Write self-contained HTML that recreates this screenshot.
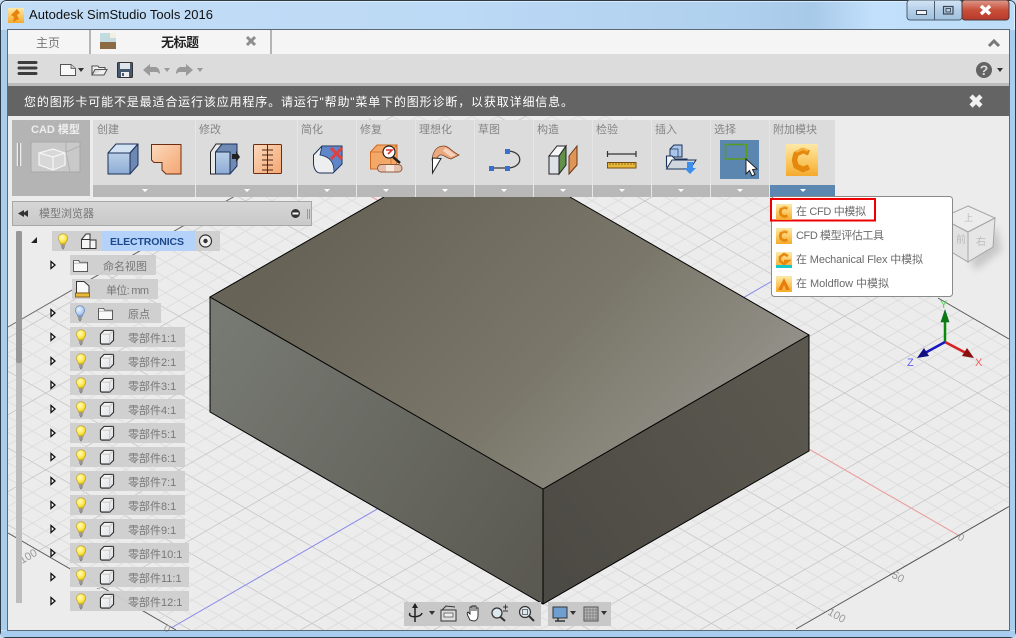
<!DOCTYPE html>
<html><head><meta charset="utf-8"><title>Autodesk SimStudio Tools 2016</title>
<style>
html,body{margin:0;padding:0;width:1016px;height:638px;overflow:hidden;background:#b9d7f3}
svg{display:block}
text{font-family:"Liberation Sans","Noto Sans CJK SC",sans-serif}
.l{font-size:11px;fill:#858585}
.t{font-size:11px;fill:#777}
.m{font-size:11px;fill:#6a6a6a}
</style></head><body>
<svg xmlns="http://www.w3.org/2000/svg" width="1016" height="638" viewBox="0 0 1016 638">
<defs>
<linearGradient id="aero" x1="0" x2="1" y1="0" y2="0"><stop offset="0" stop-color="#c3ddf6"/><stop offset=".45" stop-color="#bcd9f5"/><stop offset=".72" stop-color="#afd0ee"/><stop offset=".8" stop-color="#a8cae9"/><stop offset=".86" stop-color="#c2e0fb"/><stop offset="1" stop-color="#bcdcf8"/></linearGradient>
<linearGradient id="red" x1="0" x2="0" y1="0" y2="1"><stop offset="0" stop-color="#dd9a8c"/><stop offset=".5" stop-color="#c8503a"/><stop offset="1" stop-color="#b8382a"/></linearGradient>
<linearGradient id="btn" x1="0" x2="0" y1="0" y2="1"><stop offset="0" stop-color="#d5e6f6"/><stop offset=".5" stop-color="#b5cfe8"/><stop offset="1" stop-color="#9fc0de"/></linearGradient>
<linearGradient id="blu" x1="0" x2="0" y1="0" y2="1"><stop offset="0" stop-color="#b9cfe8"/><stop offset="1" stop-color="#8dabd4"/></linearGradient>
<linearGradient id="org" x1="0" x2="1" y1="0" y2="1"><stop offset="0" stop-color="#fbd9bd"/><stop offset="1" stop-color="#f4a671"/></linearGradient>
<linearGradient id="gold" x1="0" x2="0" y1="0" y2="1"><stop offset="0" stop-color="#fde9a8"/><stop offset=".6" stop-color="#fac55a"/><stop offset="1" stop-color="#f5a92e"/></linearGradient>
<linearGradient id="fa" gradientUnits="userSpaceOnUse" x1="340" y1="210" x2="640" y2="500"><stop offset="0" stop-color="#676457"/><stop offset=".6" stop-color="#7a776a"/><stop offset="1" stop-color="#918f86"/></linearGradient>
<linearGradient id="fb" gradientUnits="userSpaceOnUse" x1="210" y1="330" x2="540" y2="560"><stop offset="0" stop-color="#777a73"/><stop offset="1" stop-color="#5b5a52"/></linearGradient>
<linearGradient id="fc" gradientUnits="userSpaceOnUse" x1="543" y1="560" x2="809" y2="370"><stop offset="0" stop-color="#4c4a44"/><stop offset="1" stop-color="#5b594f"/></linearGradient>
<linearGradient id="hdr" x1="0" x2="0" y1="0" y2="1"><stop offset="0" stop-color="#d6d6d6"/><stop offset="1" stop-color="#c9c9c9"/></linearGradient>
<linearGradient id="cube" x1="0" x2="1" y1="0" y2="1"><stop offset="0" stop-color="#fafafa"/><stop offset="1" stop-color="#dcdfe4"/></linearGradient>
<radialGradient id="bulbY" cx=".4" cy=".35" r=".7"><stop offset="0" stop-color="#fffbc8"/><stop offset=".6" stop-color="#ffe94a"/><stop offset="1" stop-color="#e0b018"/></radialGradient>
<radialGradient id="bulbB" cx=".4" cy=".35" r=".7"><stop offset="0" stop-color="#eef4ff"/><stop offset=".6" stop-color="#b6cff2"/><stop offset="1" stop-color="#7f9fd0"/></radialGradient>
<filter id="soft" x="-30%" y="-30%" width="160%" height="160%"><feGaussianBlur stdDeviation="4"/></filter>

<pattern id="gA" patternUnits="userSpaceOnUse" width="100" height="76.8" patternTransform="translate(0,-17.8) skewY(29.98)">
<path d="M0 15.36H100M0 30.72H100M0 46.08H100M0 61.44H100" stroke="#dcdcdc" stroke-width="1" fill="none"/><path d="M0 0H100" stroke="#bdbdbd" stroke-width="1.4" fill="none"/></pattern>
<pattern id="gB" patternUnits="userSpaceOnUse" width="100" height="76.8" patternTransform="translate(0,726.2) skewY(-29.98)">
<path d="M0 15.36H100M0 30.72H100M0 46.08H100M0 61.44H100" stroke="#dcdcdc" stroke-width="1" fill="none"/><path d="M0 0H100" stroke="#bdbdbd" stroke-width="1.4" fill="none"/></pattern>
<clipPath id="gc"><polygon points="0,331.6 498,44 1016,343 1016,502 485,808 0,528"/></clipPath>

<symbol id="by" viewBox="0 0 14 20" overflow="visible"><path d="M7 1C3.500 1 1.500 3.500 1.500 6.300c0 2.600 2.200 3.800 2.700 6.700h5.600c.5-2.900 2.700-4.100 2.700-6.700C12.500 3.500 10.500 1 7 1z" fill="url(#bulbY)" stroke="#b89a20" stroke-width=".7"/><path d="M4.500 13.500h5v1.500h-5zM5 15.500h4v2h-4z" fill="#8a8a8a"/><path d="M6 18h2v1H6z" fill="#555"/></symbol>
<symbol id="bb" viewBox="0 0 14 20" overflow="visible"><path d="M7 1C3.500 1 1.500 3.500 1.500 6.300c0 2.600 2.200 3.800 2.700 6.700h5.600c.5-2.900 2.700-4.100 2.700-6.700C12.500 3.500 10.500 1 7 1z" fill="url(#bulbB)" stroke="#5d7fb8" stroke-width=".7"/><path d="M4.500 13.500h5v1.500h-5zM5 15.500h4v2h-4z" fill="#8a8a8a"/><path d="M6 18h2v1H6z" fill="#555"/></symbol>
<symbol id="pt" viewBox="0 0 16 17" overflow="visible"><path d="M1 5.500 5 1.500H15V12L11 16H2L1 15z" fill="url(#cube)" stroke="#222" stroke-width="1.100" stroke-linejoin="round"/><path d="M1.500 5.500H11V15.500M11 5.500 15 1.500" fill="none" stroke="#bbb" stroke-width=".8"/></symbol>
<symbol id="fd" viewBox="0 0 16 14" overflow="visible"><path d="M.5 2V13.500H15.500V3.500H7L6 1.500H1z" fill="#f8f8f8" stroke="#444" stroke-width=".9"/><path d="M1 4.500H15" stroke="#aaa" stroke-width=".8"/></symbol>
<symbol id="tw" viewBox="0 0 6 10" overflow="visible"><path d="M1 1.500 5 5 1 8.500z" fill="#fff" stroke="#111" stroke-width="1.300"/></symbol>
<symbol id="cl" viewBox="0 0 32 32" overflow="visible"><rect width="32" height="32" fill="url(#gold)"/><path d="M23 9 17 6.500 10 10 8.500 16 10 22 17 25.500 23 23" fill="none" stroke="#e5890e" stroke-width="5.500" stroke-linejoin="round"/><path d="M22 6.500 17 5 10 8" fill="none" stroke="#f6b540" stroke-width="2"/></symbol>
</defs>

<!-- window frame -->
<rect width="1016" height="638" fill="url(#aero)"/>
<rect x=".5" y=".5" width="1015" height="637" rx="6" fill="none" stroke="#2e3a46" stroke-width="1"/>
<rect x="1.500" y="1.500" width="1013" height="635" rx="5" fill="none" stroke="#e4f1fb" stroke-width="1" opacity=".8"/>
<rect x="1" y="30" width="6" height="600" fill="#a9cdec"/>
<rect x="1010" y="30" width="5" height="600" fill="#a9cdec"/>
<rect x="1" y="631" width="1014" height="6" fill="#a8cdee"/>

<!-- client -->
<rect x="8" y="30" width="1001" height="600" fill="#ececec"/>

<!-- grid -->
<g clip-path="url(#gc)"><rect x="8" y="30" width="1001" height="600" fill="url(#gA)"/><rect x="8" y="30" width="1001" height="600" fill="url(#gB)"/></g>
<path d="M172 627.500 800 265" stroke="#8a8af0" stroke-width="1" fill="none"/>
<path d="M360 190 958 535" stroke="#f09a9a" stroke-width="1" fill="none"/>
<path d="M8 533 176 630" stroke="#555" stroke-width="1" fill="none"/>
<path d="M796 629 1009 506.500" stroke="#555" stroke-width="1" fill="none"/>
<path d="M8 327 300 158.500" stroke="#666" stroke-width="1" fill="none"/>
<path d="M938 298 1009 339" stroke="#555" stroke-width="1" fill="none"/>
<g font-size="11" fill="#999"><text transform="translate(22,564) rotate(-30)">100</text><text transform="translate(97,590) rotate(-30)" font-size="10">50</text><text transform="translate(163,630) rotate(30)" font-size="10">0</text><text transform="translate(957,539) rotate(30)" font-size="10">0</text><text transform="translate(891,577) rotate(30)">50</text><text transform="translate(827,614) rotate(30)">100</text></g>

<!-- 3D box -->
<polygon points="210,297 384,197 570,197 809,335 543,489" fill="url(#fa)"/>
<polygon points="210,297 543,489 543,604 210,412" fill="url(#fb)"/>
<polygon points="543,489 809,335 809,451 543,604" fill="url(#fc)"/>
<path d="M384 197 210 297 543 489 809 335 570 197M210 297V412L543 604 809 451V335M543 489V604" fill="none" stroke="#000" stroke-width="1"/>

<!-- titlebar -->
<rect x="8" y="8" width="16" height="15" fill="url(#gold)"/>
<path d="M17 9 20 13 17 15 19 19 13 22 14 17 11 15z" fill="#e8820c"/>
<text x="29" y="19" font-size="13" fill="#101010" textLength="184">Autodesk SimStudio Tools 2016</text>
<rect x="907" y="0" width="55" height="20" rx="3" fill="url(#btn)" stroke="#4d5e70" stroke-width="1"/>
<rect x="962" y="0" width="47" height="20" rx="3" fill="url(#red)" stroke="#4d3a3a" stroke-width="1"/>
<path d="M934.500 1V20" stroke="#4d5e70" stroke-width="1"/>
<rect x="916.500" y="10.500" width="10" height="4" fill="#f2f6fa" stroke="#3c4650" stroke-width="1"/>
<rect x="943.500" y="6.500" width="9.500" height="7.500" fill="none" stroke="#3c4650" stroke-width="1.200"/><rect x="946" y="8.500" width="4.500" height="3.500" fill="none" stroke="#3c4650" stroke-width=".9"/>
<path d="M981 6 990 14M990 6 981 14" stroke="#fff" stroke-width="3.500"/>
<rect x="7.500" y="29.500" width="1002" height="601" fill="none" stroke="#5c6a78" stroke-width="1"/>

<!-- tabs -->
<rect x="8" y="30" width="1001" height="24" fill="#f5f5f5"/>
<rect x="89" y="30" width="2" height="24" fill="#b5b5b5"/>
<rect x="270" y="30" width="2" height="24" fill="#b5b5b5"/>
<text x="36" y="47" font-size="12" fill="#777">主页</text>
<rect x="100" y="33" width="16" height="16" fill="#c2dbe0"/><rect x="100" y="42" width="16" height="7" fill="#8b6a44"/><path d="M110 33h6v5h-6z" fill="#f4f0e0"/>
<text x="161" y="47" font-size="13" font-weight="700" fill="#222" textLength="38">无标题</text>
<path d="M247 37 255 45M255 37 247 45" stroke="#8e8e8e" stroke-width="3"/>
<path d="M989 46 994 41 999 46" fill="none" stroke="#777" stroke-width="3"/>

<!-- toolbar -->
<rect x="8" y="54" width="1001" height="29" fill="#dcdcdc"/>
<rect x="8" y="83" width="1001" height="3" fill="#bcbcbc"/>
<path d="M19 62.500H36M19 68H36M19 73.500H36" stroke="#3c3c3c" stroke-width="3" stroke-linecap="round"/>
<path d="M60.500 64.500H71L75.500 68.500V75.500H60.500z" fill="#f8f8f8" stroke="#555" stroke-width="1"/><path d="M71 64.500V68.500H75.500" fill="#ccc" stroke="#555" stroke-width=".8"/>
<path d="M78 68H84L81 72z" fill="#333"/>
<path d="M92 75V66H98L99 67.500H105V69M92 75H104L107 69.500H95z" fill="#eef0f2" stroke="#555" stroke-width="1.100"/>
<rect x="117.500" y="62.500" width="15" height="15" rx="1" fill="#46586e" stroke="#333" stroke-width="1"/><rect x="120" y="63" width="10" height="6" fill="#dfe5ea"/><rect x="121" y="72" width="8" height="5" fill="#eee"/><rect x="122" y="73" width="2" height="3" fill="#46586e"/>
<path d="M143 70 150 64V67H155C158 67 160 70 160 74L157 72H150V76z" fill="#9a9a9a"/><path d="M164 68H170L167 72z" fill="#9a9a9a"/>
<path d="M193 70 186 64V67H181C178 67 176 70 176 74L179 72H186V76z" fill="#9a9a9a"/><path d="M197 68H203L200 72z" fill="#9a9a9a"/>
<circle cx="984" cy="70" r="8" fill="#636363"/><text x="984" y="75" font-size="14" font-weight="700" fill="#dcdcdc" text-anchor="middle">?</text><path d="M997 68H1003L1000 72z" fill="#333"/>

<!-- notice -->
<rect x="8" y="86" width="1001" height="30" fill="#646464"/>
<text x="24" y="106" font-size="12" fill="#fff" textLength="549">您的图形卡可能不是最适合运行该应用程序。请运行"帮助"菜单下的图形诊断，以获取详细信息。</text>
<path d="M971 96 981 106M981 96 971 106" stroke="#f0f0f0" stroke-width="4.500"/>

<!-- ribbon -->
<rect x="93" y="120" width="742" height="77" fill="#e6e6e6"/>
<rect x="12" y="120" width="78" height="76" fill="#b4b4b4"/>
<text x="31" y="133" font-size="11" font-weight="700" fill="#eee">CAD 模型</text>
<path d="M17.500 143V166M20.500 143V166" stroke="#eee" stroke-width="1.500"/><path d="M19 143V166" stroke="#777" stroke-width="1"/>
<rect x="31" y="142" width="49" height="30" fill="#c9c9c9" stroke="#a8a8a8"/>
<path d="M66 142V152L80 146M66 152 70 172" fill="none" stroke="#b0b0b0"/>
<path d="M39 153 53 149 65 153V165L53 170 39 165z" fill="#d8d8d8" stroke="#f5f5f5" stroke-width="1.200"/><path d="M39 153 53 157 65 153M53 157V170" fill="none" stroke="#f5f5f5" stroke-width="1.200"/>

<g fill="#dcdcdc">
<rect x="93" y="120" width="102" height="65"/><rect x="196" y="120" width="101" height="65"/><rect x="298" y="120" width="58" height="65"/><rect x="357" y="120" width="58" height="65"/><rect x="416" y="120" width="58" height="65"/><rect x="475" y="120" width="58" height="65"/><rect x="534" y="120" width="58" height="65"/><rect x="593" y="120" width="58" height="65"/><rect x="652" y="120" width="58" height="65"/><rect x="711" y="120" width="58" height="65"/><rect x="770" y="120" width="65" height="65"/>
</g>
<g fill="#b8b8b8">
<rect x="93" y="185" width="102" height="12"/><rect x="196" y="185" width="101" height="12"/><rect x="298" y="185" width="58" height="12"/><rect x="357" y="185" width="58" height="12"/><rect x="416" y="185" width="58" height="12"/><rect x="475" y="185" width="58" height="12"/><rect x="534" y="185" width="58" height="12"/><rect x="593" y="185" width="58" height="12"/><rect x="652" y="185" width="58" height="12"/><rect x="711" y="185" width="58" height="12"/>
</g>
<rect x="770" y="185" width="65" height="12" fill="#5b87b0"/>
<g fill="#fff"><path d="M142 189h6l-3 3zM244 189h6l-3 3zM324 189h6l-3 3zM383 189h6l-3 3zM442 189h6l-3 3zM501 189h6l-3 3zM560 189h6l-3 3zM619 189h6l-3 3zM678 189h6l-3 3zM737 189h6l-3 3zM800 189h6l-3 3z"/></g>
<g class="l"><text class="l" x="97" y="133">创建</text><text class="l" x="199" y="133">修改</text><text class="l" x="301" y="133">简化</text><text class="l" x="360" y="133">修复</text><text class="l" x="419" y="133">理想化</text><text class="l" x="478" y="133">草图</text><text class="l" x="537" y="133">构造</text><text class="l" x="596" y="133">检验</text><text class="l" x="655" y="133">插入</text><text class="l" x="714" y="133">选择</text><text class="l" x="773" y="133">附加模块</text></g>

<!-- create box -->
<g stroke="#1c3158" stroke-width="1" stroke-linejoin="round"><path d="M108 153 116 144H138L130 153z" fill="#d2e2f3"/><path d="M130 153 138 144V165L130 174z" fill="#6d88b2"/><rect x="108" y="153" width="22" height="21" fill="url(#blu)"/></g>
<path d="M151.500 144.500H181V174H166L162 170V162.500H154L151.500 160z" fill="url(#org)" stroke="#6f2c10" stroke-width="1"/>
<!-- press pull -->
<path d="M210.500 174V152L216 144H222V174z" fill="#e8e8e8" stroke="#222"/><path d="M215.500 174V152L222 144H237V166L230 174z" fill="#6f8bb4" stroke="#1c3158"/><rect x="215.500" y="152" width="14.500" height="22" fill="url(#blu)" stroke="#1c3158"/>
<path d="M232 154H236V151L240 157 236 162V159H232z" fill="#222"/>
<!-- split -->
<rect x="253.500" y="144.500" width="28" height="29" rx="1" fill="url(#org)" stroke="#6f2c10"/><path d="M267.500 144.500V174M262 150H273M262 155H273M262 160H273M262 165H273M262 170H273" stroke="#4a2a1a" stroke-width="1"/>
<!-- simplify -->
<path d="M313.500 155 322 146H342V164L333 173H320C316 173 313.500 168 313.500 163z" fill="#eceef0" stroke="#1c3158"/>
<path d="M322 146H342V164L334 172C334 162 330 157 320 155z" fill="#5f86c8" stroke="#1c3158" stroke-width=".8"/>
<path d="M331 148 342 159M342 148 331 159" stroke="#e04040" stroke-width="3"/>
<!-- repair -->
<path d="M370.500 152 377 145H397V163L392 169H370.500z" fill="#f4a868" stroke="#d06a20"/><path d="M370.500 152H391V169M391 152 397 145" fill="none" stroke="#d06a20" stroke-width=".8"/>
<circle cx="389" cy="152" r="6" fill="#fff" stroke="#222" stroke-width="1.200"/><path d="M386 150H392L388 154" stroke="#d33" stroke-width="1.600" fill="none"/><path d="M393 157 400 163" stroke="#222" stroke-width="2.500"/>
<rect x="377.500" y="164.500" width="24.500" height="7.500" rx="3.700" fill="#e6c0ac" stroke="#8c5a40"/><rect x="386" y="165" width="8" height="6.500" fill="#f6e6dc"/>
<!-- idealize -->
<path d="M432 160C433 150 437 146 444 146 449 146 452 152 459 155L451 159C446 158 443 154 440 155 437 156 436 160 434 163z" fill="#eba97f" stroke="#7a4020" stroke-width=".8"/>
<path d="M445 148C449 149 452 153 456 155L451 157C448 155 445 152 443 151z" fill="#f7d2ba"/>
<path d="M432.500 173V158L441 158.500z" fill="#fff" stroke="#222"/>
<!-- sketch -->
<path d="M491 168H507C524 168 524 151 507 151" fill="none" stroke="#3a3a3a" stroke-width="1.300"/><g fill="#3a6fd0"><rect x="489" y="166" width="5" height="5"/><rect x="505" y="166" width="5" height="5"/><rect x="505" y="149" width="5" height="5"/></g>
<!-- construct -->
<rect x="549" y="156" width="10" height="18" fill="#dde2e8" stroke="#222"/><path d="M549 156 557 146H566L559 156z" fill="#f4f6f8" stroke="#222"/><path d="M559 156 566 146V165L559 174z" fill="#629049" stroke="#222"/>
<path d="M569 156 577 146V165L569 174z" fill="#dd9558" stroke="#6b3518"/>
<!-- inspect -->
<path d="M607.500 151V157M636 151V157M607.500 154H636" stroke="#333" stroke-width="1.200" fill="none"/><rect x="607.500" y="162.500" width="28.500" height="5.500" fill="#e7b93a" stroke="#7a4d10"/><path d="M610 163V165M613 163V165M616 163V165M619 163V165M622 163V165M625 163V165M628 163V165M631 163V165M634 163V165" stroke="#7a4d10" stroke-width=".7"/>
<!-- insert -->
<path d="M670 149 674 145H682V157H670z" fill="#a9c6ea" stroke="#1c3158"/><path d="M670 149H678V157" fill="none" stroke="#1c3158" stroke-width=".7"/>
<path d="M666.500 167V156H672L675 159H687V167z" fill="#f2f4f6" stroke="#1c3158" stroke-width="1.100"/><path d="M666.500 169 672 160H696L690 169z" fill="#cfd6de" stroke="#1c3158"/>
<path d="M687 162H693V168H696L690 174 684 168H687z" fill="#3c8ee8"/>
<!-- select -->
<rect x="720" y="140" width="39" height="39" fill="#5a86b0"/><rect x="725.500" y="144.500" width="21" height="14.500" fill="none" stroke="#5a9a20" stroke-width="1.500"/>
<path d="M746 159V174L749.500 170.500 752 176 755 174.500 752.500 169.500 757 169z" fill="#fff" stroke="#222" stroke-width="1"/>
<!-- addins -->
<use href="#cl" x="786" y="144" width="32" height="32"/>

<!-- browser panel -->
<rect x="12.500" y="201.500" width="299" height="24" fill="url(#hdr)" stroke="#a8a8a8"/>
<path d="M24 210V217L18 213.500zM28 210V217L22.500 213.500z" fill="#333"/>
<text x="39" y="217" font-size="11" fill="#777">模型浏览器</text>
<circle cx="295.500" cy="213.500" r="4.500" fill="#333"/><rect x="292.500" y="212.500" width="6" height="2" fill="#fff"/>
<path d="M307.500 209V219M309.500 209V219" stroke="#999" stroke-width="1"/>
<rect x="16" y="231" width="6" height="372" fill="#bdbdbd"/><rect x="16" y="231" width="6" height="132" rx="2" fill="#989898"/>

<!-- tree -->
<g fill="#cfcfcf" fill-opacity=".95">
<rect x="52" y="231" width="168" height="20"/><rect x="70" y="255" width="86" height="20"/><rect x="72" y="279" width="86" height="20"/><rect x="70" y="303" width="91" height="20"/>
<rect x="70" y="327" width="115" height="20"/><rect x="70" y="351" width="115" height="20"/><rect x="70" y="375" width="115" height="20"/><rect x="70" y="399" width="115" height="20"/><rect x="70" y="423" width="115" height="20"/><rect x="70" y="447" width="115" height="20"/><rect x="70" y="471" width="115" height="20"/><rect x="70" y="495" width="115" height="20"/><rect x="70" y="519" width="115" height="20"/><rect x="70" y="543" width="119" height="20"/><rect x="70" y="567" width="119" height="20"/><rect x="70" y="591" width="119" height="20"/>
</g>
<rect x="102" y="231" width="93" height="20" fill="#b5d3fa"/>
<text x="110" y="245" font-size="10.500" font-weight="700" fill="#1c4a8c" textLength="74">ELECTRONICS</text>
<path d="M31 243H37V237z" fill="#222"/>
<use href="#by" x="56" y="233" width="14" height="17"/>
<path d="M81.500 239.500 86 234H90V240H96V248.500H81.500zM81.500 239.500H90V248.500" fill="#f5f5f5" stroke="#333" stroke-width="1"/>
<circle cx="205.500" cy="241" r="6" fill="#f0f0f0" stroke="#333" stroke-width="1.200"/><circle cx="205.500" cy="241" r="2.200" fill="#333"/>

<use href="#tw" x="50" y="260" width="6" height="10"/>
<use href="#fd" x="73" y="259" width="15" height="13"/>
<text x="103" y="270" class="t">命名视图</text>
<path d="M76.500 281.500H84L89 286V293H76.500z" fill="#f8f8f8" stroke="#333"/><rect x="75.500" y="293" width="14" height="4" fill="#e7b93a" stroke="#7a4d10" stroke-width=".8"/>
<text x="106" y="294" class="t" textLength="43">单位: mm</text>
<use href="#tw" x="50" y="308" width="6" height="10"/>
<use href="#bb" x="73" y="305" width="14" height="17"/>
<use href="#fd" x="98" y="307" width="15" height="13"/>
<text x="128" y="318" class="t">原点</text>

<use href="#tw" x="50" y="332" width="6" height="10"/><use href="#by" x="74" y="329" width="14" height="17"/><use href="#pt" x="99" y="329" width="16" height="16"/><text x="128" y="342" class="t">零部件1:1</text>
<use href="#tw" x="50" y="356" width="6" height="10"/><use href="#by" x="74" y="353" width="14" height="17"/><use href="#pt" x="99" y="353" width="16" height="16"/><text x="128" y="366" class="t">零部件2:1</text>
<use href="#tw" x="50" y="380" width="6" height="10"/><use href="#by" x="74" y="377" width="14" height="17"/><use href="#pt" x="99" y="377" width="16" height="16"/><text x="128" y="390" class="t">零部件3:1</text>
<use href="#tw" x="50" y="404" width="6" height="10"/><use href="#by" x="74" y="401" width="14" height="17"/><use href="#pt" x="99" y="401" width="16" height="16"/><text x="128" y="414" class="t">零部件4:1</text>
<use href="#tw" x="50" y="428" width="6" height="10"/><use href="#by" x="74" y="425" width="14" height="17"/><use href="#pt" x="99" y="425" width="16" height="16"/><text x="128" y="438" class="t">零部件5:1</text>
<use href="#tw" x="50" y="452" width="6" height="10"/><use href="#by" x="74" y="449" width="14" height="17"/><use href="#pt" x="99" y="449" width="16" height="16"/><text x="128" y="462" class="t">零部件6:1</text>
<use href="#tw" x="50" y="476" width="6" height="10"/><use href="#by" x="74" y="473" width="14" height="17"/><use href="#pt" x="99" y="473" width="16" height="16"/><text x="128" y="486" class="t">零部件7:1</text>
<use href="#tw" x="50" y="500" width="6" height="10"/><use href="#by" x="74" y="497" width="14" height="17"/><use href="#pt" x="99" y="497" width="16" height="16"/><text x="128" y="510" class="t">零部件8:1</text>
<use href="#tw" x="50" y="524" width="6" height="10"/><use href="#by" x="74" y="521" width="14" height="17"/><use href="#pt" x="99" y="521" width="16" height="16"/><text x="128" y="534" class="t">零部件9:1</text>
<use href="#tw" x="50" y="548" width="6" height="10"/><use href="#by" x="74" y="545" width="14" height="17"/><use href="#pt" x="99" y="545" width="16" height="16"/><text x="128" y="558" class="t">零部件10:1</text>
<use href="#tw" x="50" y="572" width="6" height="10"/><use href="#by" x="74" y="569" width="14" height="17"/><use href="#pt" x="99" y="569" width="16" height="16"/><text x="128" y="582" class="t">零部件11:1</text>
<use href="#tw" x="50" y="596" width="6" height="10"/><use href="#by" x="74" y="593" width="14" height="17"/><use href="#pt" x="99" y="593" width="16" height="16"/><text x="128" y="606" class="t">零部件12:1</text>

<!-- view cube -->
<path d="M970 262 996 226 1002 250 976 270z" fill="#a8a8a8" opacity=".55" filter="url(#soft)"/>
<path d="M968 206 995 218 968 232 941 218z" fill="#ececec" stroke="#a5a5a5"/><path d="M968 232 995 218 993 247 968 262z" fill="#e6e6e6" stroke="#a5a5a5"/><path d="M968 232 941 218 943 247 968 262z" fill="#e2e2e2" stroke="#a5a5a5"/>
<text x="956" y="243" font-size="10" fill="#bbb">前</text><text x="976" y="245" font-size="10" fill="#bbb">右</text><text x="964" y="221" font-size="9" fill="#bbb">上</text>

<!-- triad -->
<path d="M945 342V318" stroke="#0a8a0a" stroke-width="2.500"/><path d="M945 310 941 322H949z" fill="#0a7a0a" stroke="#063" stroke-width=".6"/>
<path d="M945 342 966 353" stroke="#d82020" stroke-width="2.500"/><path d="M974 358 962 356 967 348z" fill="#8a1010"/>
<path d="M945 342 925 353" stroke="#1818c0" stroke-width="2.500"/><path d="M917 358 929 356 924 348z" fill="#101080"/>
<text x="940" y="308" font-size="11" fill="#44e044">Y</text><text x="975" y="366" font-size="11" fill="#f06060">X</text><text x="907" y="366" font-size="11" fill="#6060f0">Z</text>

<!-- menu -->
<rect x="771.500" y="196.500" width="181" height="100" rx="3" fill="#fff" stroke="#8a8a8a"/>
<rect x="771" y="199" width="104" height="21.500" fill="none" stroke="#ee0000" stroke-width="2"/>
<use href="#cl" x="776" y="204" width="16" height="16"/>
<use href="#cl" x="776" y="228" width="16" height="16"/>
<rect x="776" y="252" width="16" height="16" fill="url(#gold)"/><path d="M788 256 784 254 780 257 780 261 784 264 788 261H784" fill="none" stroke="#e8860c" stroke-width="2.500"/><rect x="776" y="265" width="16" height="3" fill="#18c8c8"/>
<rect x="776" y="276" width="16" height="16" fill="url(#gold)"/><path d="M778 290 784 278 790 290H786L784 285 782 290z" fill="#e87c0c"/>
<text x="796" y="215" class="m" textLength="70">在 CFD 中模拟</text>
<text x="796" y="239" class="m" textLength="88">CFD 模型评估工具</text>
<text x="796" y="263" class="m" textLength="127">在 Mechanical Flex 中模拟</text>
<text x="796" y="287" class="m" textLength="93">在 Moldflow 中模拟</text>

<!-- bottom toolbar -->
<rect x="404" y="602" width="137" height="24" fill="#c8c8c8"/><rect x="548" y="602" width="63" height="24" fill="#c8c8c8"/>
<path d="M415 604V622M410 613C407 618 421 618 422 613" fill="none" stroke="#222" stroke-width="1.500"/><path d="M415 603 412 608H418z" fill="#222"/>
<path d="M429 611h6l-3 4z" fill="#333"/>
<rect x="441" y="610" width="15" height="11" fill="#ddd" stroke="#333"/><rect x="444" y="613" width="9" height="4" fill="#eee" stroke="#444" stroke-width=".7"/><path d="M442 610 446 606 455 607" fill="none" stroke="#333"/>
<path d="M470 620C468 616 466 613 468 612L470 614V607H472V611 606H474V611 606H476V611 608H478V616C478 619 476 621 474 621z" fill="#fff" stroke="#222" stroke-width=".9"/>
<circle cx="497" cy="613" r="5" fill="#dbe8f0" stroke="#333" stroke-width="1.200"/><path d="M500.500 617 505 621" stroke="#333" stroke-width="2"/><path d="M503 607H508M505.500 604.500V609.500M503 611H508" stroke="#333" stroke-width="1"/>
<circle cx="525" cy="612" r="5.500" fill="#dbe8f0" stroke="#333" stroke-width="1.200"/><rect x="522.500" y="609.500" width="5" height="5" fill="none" stroke="#555" stroke-width=".8"/><path d="M529 616 534 621" stroke="#333" stroke-width="2"/>
<rect x="553" y="607" width="14" height="11" fill="#6f9fd0" stroke="#333"/><path d="M558 618V621M555 621H565" stroke="#333" stroke-width="1.500"/><path d="M570 611h6l-3 4z" fill="#333"/>
<rect x="584" y="607" width="14" height="14" fill="#bbb" stroke="#555"/><path d="M587 607V621M590 607V621M593 607V621M596 607V621M584 610H598M584 613H598M584 616H598M584 619H598" stroke="#777" stroke-width=".7"/><path d="M601 611h6l-3 4z" fill="#333"/>
</svg>
</body></html>
